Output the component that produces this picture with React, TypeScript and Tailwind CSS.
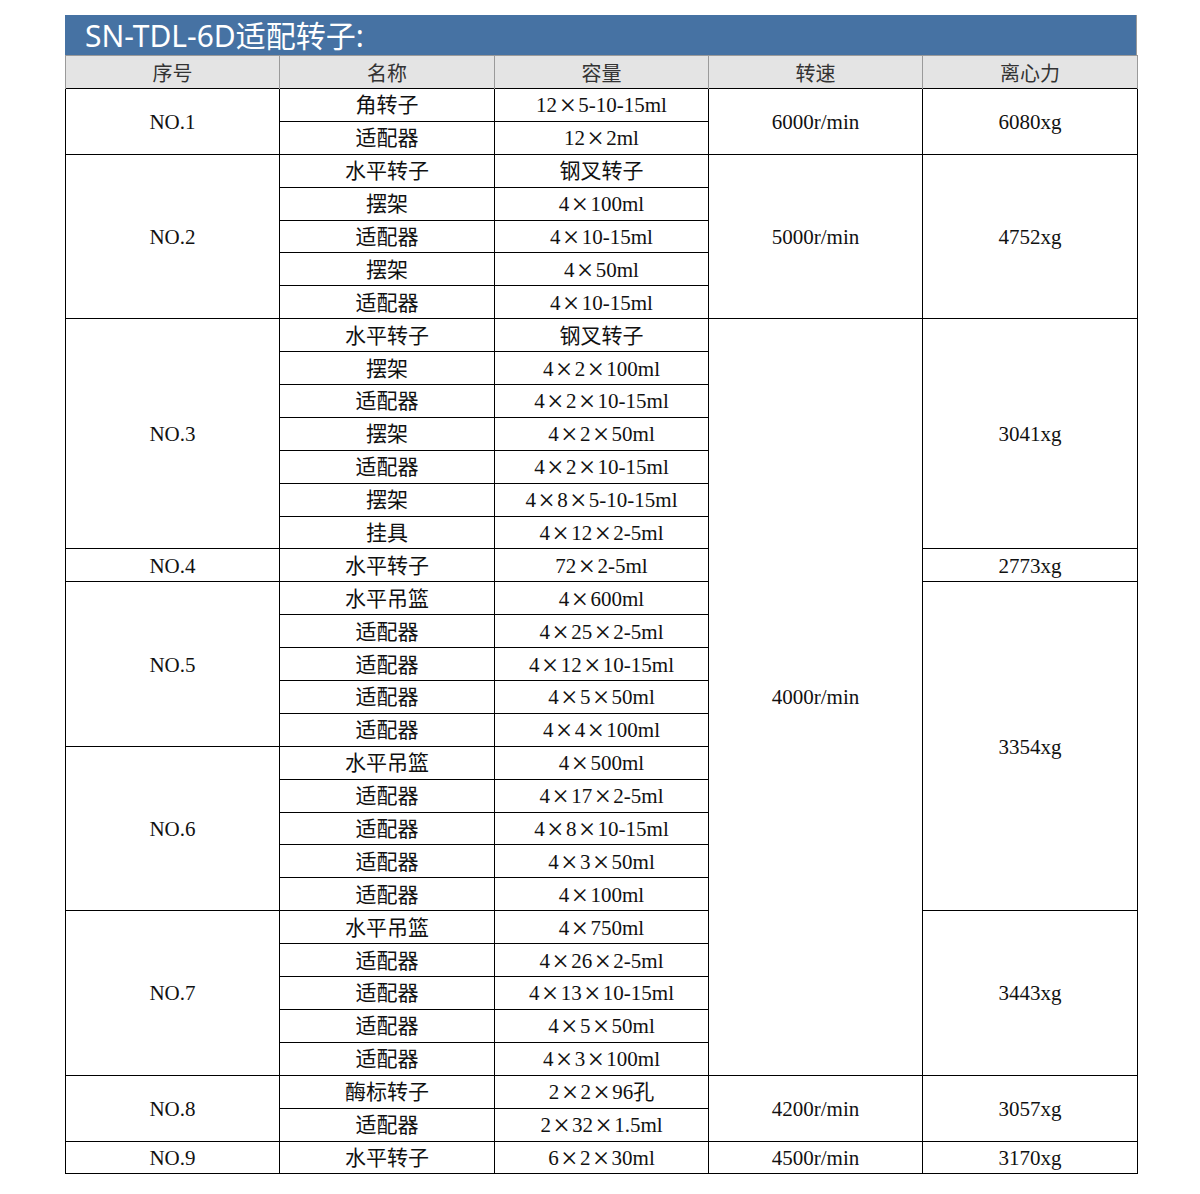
import React from "react"

type Row = {
  no?: { text: string; span: number }
  name: string
  cap: string
  speed?: { text: string; span: number }
  force?: { text: string; span: number }
}

const rows: Row[] = [
  { no: { text: "NO.1", span: 2 }, name: "角转子", cap: "12×5-10-15ml", speed: { text: "6000r/min", span: 2 }, force: { text: "6080xg", span: 2 } },
  { name: "适配器", cap: "12×2ml" },

  { no: { text: "NO.2", span: 5 }, name: "水平转子", cap: "钢叉转子", speed: { text: "5000r/min", span: 5 }, force: { text: "4752xg", span: 5 } },
  { name: "摆架", cap: "4×100ml" },
  { name: "适配器", cap: "4×10-15ml" },
  { name: "摆架", cap: "4×50ml" },
  { name: "适配器", cap: "4×10-15ml" },

  { no: { text: "NO.3", span: 7 }, name: "水平转子", cap: "钢叉转子", speed: { text: "4000r/min", span: 23 }, force: { text: "3041xg", span: 7 } },
  { name: "摆架", cap: "4×2×100ml" },
  { name: "适配器", cap: "4×2×10-15ml" },
  { name: "摆架", cap: "4×2×50ml" },
  { name: "适配器", cap: "4×2×10-15ml" },
  { name: "摆架", cap: "4×8×5-10-15ml" },
  { name: "挂具", cap: "4×12×2-5ml" },

  { no: { text: "NO.4", span: 1 }, name: "水平转子", cap: "72×2-5ml", force: { text: "2773xg", span: 1 } },

  { no: { text: "NO.5", span: 5 }, name: "水平吊篮", cap: "4×600ml", force: { text: "3354xg", span: 10 } },
  { name: "适配器", cap: "4×25×2-5ml" },
  { name: "适配器", cap: "4×12×10-15ml" },
  { name: "适配器", cap: "4×5×50ml" },
  { name: "适配器", cap: "4×4×100ml" },

  { no: { text: "NO.6", span: 5 }, name: "水平吊篮", cap: "4×500ml" },
  { name: "适配器", cap: "4×17×2-5ml" },
  { name: "适配器", cap: "4×8×10-15ml" },
  { name: "适配器", cap: "4×3×50ml" },
  { name: "适配器", cap: "4×100ml" },

  { no: { text: "NO.7", span: 5 }, name: "水平吊篮", cap: "4×750ml", force: { text: "3443xg", span: 5 } },
  { name: "适配器", cap: "4×26×2-5ml" },
  { name: "适配器", cap: "4×13×10-15ml" },
  { name: "适配器", cap: "4×5×50ml" },
  { name: "适配器", cap: "4×3×100ml" },

  { no: { text: "NO.8", span: 2 }, name: "酶标转子", cap: "2×2×96孔", speed: { text: "4200r/min", span: 2 }, force: { text: "3057xg", span: 2 } },
  { name: "适配器", cap: "2×32×1.5ml" },

  { no: { text: "NO.9", span: 1 }, name: "水平转子", cap: "6×2×30ml", speed: { text: "4500r/min", span: 1 }, force: { text: "3170xg", span: 1 } },
]

const headers = ["序号", "名称", "容量", "转速", "离心力"]

// wide multiplication sign like the source spreadsheet font
function Cap({ text }: { text: string }) {
  const parts = text.split("×")
  return (
    <>
      {parts.map((p, i) => (
        <React.Fragment key={i}>
          {i > 0 && (
            <span className="inline-block w-[0.72em] text-center align-[-0.1em] text-[1.4em] leading-[0.7]">
              ×
            </span>
          )}
          {p}
        </React.Fragment>
      ))}
    </>
  )
}

const cell = "border border-black text-center align-middle p-0 pt-[2px] leading-none"

export default function App() {
  return (
    <div className="min-h-[1194px] bg-white pl-[65px] pt-[15px]">
      <div className="w-[1072px]">
        <div className="flex h-[40px] items-center border-r border-[#999] bg-[#4672a3] pl-[20px] pt-[1px] text-[30px] leading-none text-white [font-family:'Noto_Sans','Noto_Sans_CJK_SC',sans-serif]">
          SN-TDL-6D适配转子:
        </div>
        <table className="w-[1072px] table-fixed border-collapse text-[21px] text-[#111] [font-family:'Liberation_Serif','Noto_Sans_CJK_SC',serif]">
          <colgroup>
            <col className="w-[214px]" />
            <col className="w-[215px]" />
            <col className="w-[214px]" />
            <col className="w-[214px]" />
            <col className="w-[215px]" />
          </colgroup>
          <thead>
            <tr className="h-[33px] bg-[#e4e4e4]">
              {headers.map((h) => (
                <th
                  key={h}
                  className="border-x border-t border-[#9a9a9a] border-b-black p-0 pt-[1px] text-center align-middle text-[20px] font-normal leading-none text-[#333] [font-family:'Noto_Sans_CJK_SC',sans-serif]"
                >
                  {h}
                </th>
              ))}
            </tr>
          </thead>
          <tbody>
            {rows.map((r, i) => (
              <tr key={i} className="h-[32.9px]">
                {r.no && (
                  <td rowSpan={r.no.span} className={cell}>
                    {r.no.text}
                  </td>
                )}
                <td className={cell}>{r.name}</td>
                <td className={cell}>
                  <Cap text={r.cap} />
                </td>
                {r.speed && (
                  <td rowSpan={r.speed.span} className={cell}>
                    {r.speed.text}
                  </td>
                )}
                {r.force && (
                  <td rowSpan={r.force.span} className={cell}>
                    {r.force.text}
                  </td>
                )}
              </tr>
            ))}
          </tbody>
        </table>
      </div>
    </div>
  )
}
